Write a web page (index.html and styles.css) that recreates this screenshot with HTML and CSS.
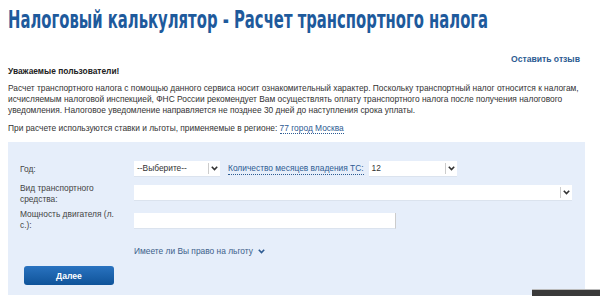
FILE: index.html
```html
<!DOCTYPE html>
<html>
	<head>
		<meta charset="utf-8" />
		<title>Налоговый калькулятор - Расчет транспортного налога</title>
		<link rel="stylesheet" href="styles.css">
	</head>
	<body>
		<h1 class="page-title"><span>Налоговый калькулятор - Расчет транспортного налога</span></h1>

		<div class="feedback">
			<a href="#">Оставить отзыв</a>
		</div>

		<div class="notice">
			<p class="notice-title">Уважаемые пользователи!</p>
			<p>Расчет транспортного налога с помощью данного сервиса носит ознакомительный характер. Поскольку транспортный налог относится к налогам, исчисляемым налоговой инспекцией, ФНС России рекомендует Вам осуществлять оплату транспортного налога после получения налогового уведомления. Налоговое уведомление направляется не позднее 30 дней до наступления срока уплаты.</p>
			<p>При расчете используются ставки и льготы, применяемые в регионе: <a class="dotted" href="#">77 город Москва</a></p>
		</div>

		<form class="calc">
			<div class="row first">
				<label class="label">Год:</label>
				<div class="field inline">
					<div class="select year">
						<span class="value">--Выберите--</span>
						<span class="arrow"><svg width="7" height="5" viewBox="0 0 7 5"><path d="M0.8 0.8 L3.5 3.6 L6.2 0.8" fill="none" stroke="#333" stroke-width="1.6"/></svg></span>
					</div>
					<a class="dotted months-link" href="#">Количество месяцев владения ТС:</a>
					<div class="select months">
						<span class="value">12</span>
						<span class="arrow"><svg width="7" height="5" viewBox="0 0 7 5"><path d="M0.8 0.8 L3.5 3.6 L6.2 0.8" fill="none" stroke="#333" stroke-width="1.6"/></svg></span>
					</div>
				</div>
			</div>

			<div class="row">
				<label class="label">Вид транспортного средства:</label>
				<div class="field">
					<div class="select wide">
						<span class="value"></span>
						<span class="arrow"><svg width="7" height="5" viewBox="0 0 7 5"><path d="M0.8 0.8 L3.5 3.6 L6.2 0.8" fill="none" stroke="#333" stroke-width="1.6"/></svg></span>
					</div>
				</div>
			</div>

			<div class="row last">
				<label class="label">Мощность двигателя (л. с.):</label>
				<div class="field">
					<input class="text-input" type="text" />
				</div>
			</div>

			<div class="row">
				<span class="label"></span>
				<a class="benefit" href="#">Имеете ли Вы право на льготу
					<svg width="7" height="5" viewBox="0 0 7 5"><path d="M0.8 0.8 L3.5 3.6 L6.2 0.8" fill="none" stroke="#2d5b92" stroke-width="1.6"/></svg>
				</a>
			</div>

			<button class="btn" type="button">Далее</button>
		</form>

		<div class="corner-bar"></div>
	</body>
</html>
```

FILE: styles.css
```css
* {
	padding: 0;
	margin: 0;
	box-sizing: border-box;
}

html, body {
	height: 296px;
	overflow: hidden;
}

body {
	position: relative;
	width: 600px;
	padding: 0 15px 0 8px;
	background: #fff;
	font-family: 'Liberation Sans', Arial, sans-serif;
	font-size: 8.4px;
	line-height: 11px;
	color: #333;
}

a {
	color: #2d5b92;
	text-decoration: none;
}

.page-title {
	padding-top: 5px;
	height: 54px;
	overflow: hidden;
	white-space: nowrap;
	font-family: 'DejaVu Sans', sans-serif;
	font-size: 25px;
	line-height: 30px;
	font-weight: bold;
	color: #1e5a9c;
}

.page-title > span {
	display: inline-block;
	transform: scaleX(0.593);
	transform-origin: left center;
}

.feedback {
	display: flex;
	justify-content: flex-end;
	padding-right: 5px;
	height: 12px;
	font-size: 8.6px;
}

.feedback > a {
	font-weight: bold;
	color: #2d5b92;
}

.notice > p {
	margin-bottom: 7px;
}

.notice > .notice-title {
	font-weight: bold;
	color: #222;
	margin-bottom: 6px;
}

.dotted {
	border-bottom: 1px dotted #2d5b92;
}

.calc {
	margin-top: 8px;
	background: #e6eefa;
	padding: 19px 12px 0 12px;
	height: 153px;
}

.row {
	display: grid;
	grid-template-columns: 114px 1fr;
	align-items: start;
	margin-bottom: 4px;
}

.row.first {
	margin-bottom: 6px;
}

.row.last {
	margin-bottom: 15px;
}

.label {
	padding-right: 14px;
	color: #444;
}

.row.first .label {
	padding-top: 3px;
}

.field.inline {
	display: flex;
	align-items: center;
	gap: 8px;
}

.select {
	display: flex;
	align-items: center;
	height: 16px;
	background: #fff;
	border-bottom: 1px solid #dbe3ee;
}

.select > .value {
	flex: 1;
	padding-left: 3px;
	color: #333;
}

.select > .arrow {
	display: flex;
	align-items: center;
	justify-content: center;
	width: 12px;
	height: 11px;
	border-left: 1px solid #ccc;
}

.select.year {
	width: 86px;
}

.select.months {
	width: 88px;
	margin-left: -3px;
}

.select.wide {
	width: 438px;
	margin-top: 2px;
}

.text-input {
	display: block;
	width: 262px;
	height: 16px;
	margin-top: 4px;
	border: none;
	border-right: 1px solid #ccc;
	border-bottom: 1px solid #dbe3ee;
	background: #fff;
	outline: none;
}

.benefit {
	display: flex;
	align-items: center;
	gap: 5px;
	color: #3d5f8a;
}

.btn {
	display: block;
	margin-top: 9px;
	margin-left: 4px;
	width: 90px;
	height: 19px;
	border: none;
	border-radius: 3px;
	background: linear-gradient(#2a73c0, #0f5399);
	color: #fff;
	font-family: 'Liberation Sans', Arial, sans-serif;
	font-size: 8.6px;
	font-weight: bold;
}

.corner-bar {
	position: absolute;
	right: 0;
	top: 289px;
	width: 68px;
	height: 7px;
	background: #3a3a3a;
	border-top: 1px solid #bbb;
}
```
